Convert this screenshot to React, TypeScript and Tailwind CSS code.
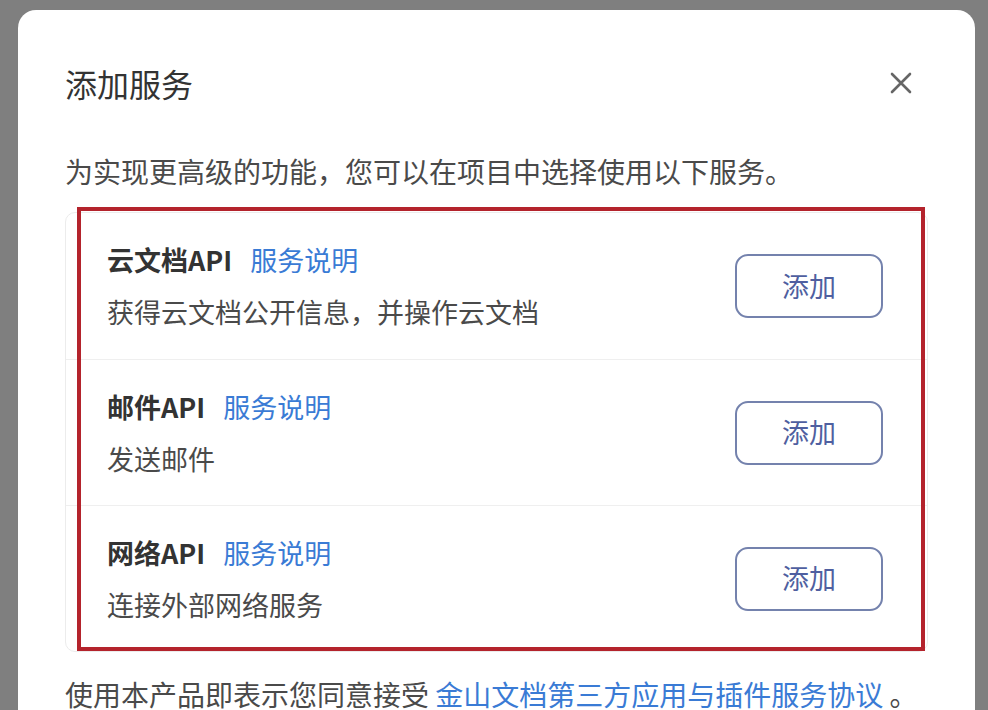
import React from "react";

const services = [
  { name: "云文档API", desc: "获得云文档公开信息，并操作云文档" },
  { name: "邮件API", desc: "发送邮件" },
  { name: "网络API", desc: "连接外部网络服务" },
];

const font = { fontFamily: '"Noto Sans CJK SC", "Noto Sans", sans-serif' };

const App: React.FC = () => {
  return (
    <div className="h-[710px] w-[988px] overflow-hidden bg-[#7f7f7f] pt-[10px] pl-[18px]" style={font}>
      <div className="w-[957px] h-[760px] rounded-[18px] bg-white pt-[51px] px-[47px]">
        {/* Header */}
        <div className="flex items-center justify-between h-[44px]">
          <h2 className="text-[32px] leading-[44px] text-[#333] font-normal">添加服务</h2>
          <button className="mr-[16px] text-[#666]">
            <svg width="22" height="22" viewBox="0 0 22 22" fill="none" stroke="currentColor" strokeWidth="2.6" strokeLinecap="round">
              <path d="M2 2L20 20M20 2L2 20" />
            </svg>
          </button>
        </div>

        <p className="mt-[46px] text-[28px] leading-[40px] text-[#4a4a4a]">
          为实现更高级的功能，您可以在项目中选择使用以下服务。
        </p>

        {/* Service list */}
        <div className="relative mt-[21px]">
          <div className="rounded-[10px] border border-[#ececec]">
            {services.map((s, i) => (
              <div
                key={s.name}
                className={`h-[146px] flex items-center justify-between pl-[41px] pr-[44px] ${
                  i > 0 ? "border-t border-[#efefef]" : ""
                }`}
              >
                <div className="flex flex-col gap-[16px]">
                  <div className="flex items-center gap-[18px] text-[27px] leading-[36px]">
                    <span className="font-bold text-[#333]">{s.name}</span>
                    <a className="text-[#3a7bd5]">服务说明</a>
                  </div>
                  <p className="text-[27px] leading-[36px] text-[#4a4a4a]">{s.desc}</p>
                </div>
                <button className="w-[148px] h-[64px] rounded-[13px] border-2 border-[#7482ad] text-[27px] text-[#4f5fa0] flex items-center justify-center">
                  添加
                </button>
              </div>
            ))}
          </div>
          {/* annotation frame */}
          <div className="absolute left-[12px] -top-[5px] w-[848px] h-[444px] border-[4px] border-[#b4232c] pointer-events-none" />
        </div>

        <p className="mt-[26px] text-[28px] leading-[32px] text-[#4a4a4a]">
          使用本产品即表示您同意接受 <a className="text-[#3a7bd5]">金山文档第三方应用与插件服务协议</a> 。
        </p>
      </div>
    </div>
  );
};

export default App;
